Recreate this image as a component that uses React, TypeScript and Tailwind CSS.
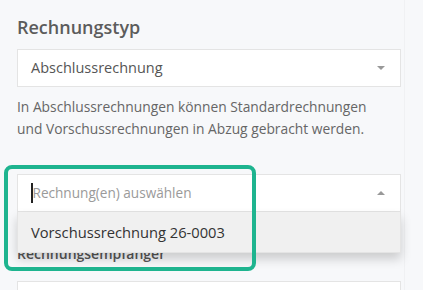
export default function App() {
  return (
    <div className="relative h-[290px] w-full overflow-hidden bg-[#f7f8fa] font-['Open_Sans',sans-serif]">
      <div className="h-full w-[405px] border-r border-[#f0f1f3] pl-[17px] pt-[15px]">
        <div className="w-[384px]">
          <h2 className="text-[18px] font-semibold leading-[25px] text-[#5c5c5c]">Rechnungstyp</h2>

          <div className="mt-[9px] flex h-[38px] items-center justify-between border border-[#e4e4e4] bg-white pl-[13px] pr-[15px] text-[14.5px] text-[#555]">
            <span>Abschlussrechnung</span>
            <span className="h-0 w-0 border-x-[4px] border-t-[4px] border-x-transparent border-t-[#999]" />
          </div>

          <p className="mt-[9px] whitespace-nowrap text-[13.8px] leading-[22px] text-[#666]">
            In Abschlussrechnungen können Standardrechnungen
            <br />
            und Vorschussrechnungen in Abzug gebracht werden.
          </p>

          <div className="relative mt-[34px]">
            <div className="flex h-[38px] items-center justify-between border border-[#e4e4e4] bg-white pl-[13px] pr-[15px] text-[13.6px]">
              <div className="flex items-center">
                <span className="h-[20px] w-[1.5px] bg-[#222]" />
                <span className="text-[#9a9a9a]">Rechnung(en) auswählen</span>
              </div>
              <span className="h-0 w-0 border-x-[4px] border-b-[4px] border-x-transparent border-b-[#999]" />
            </div>
            <div className="absolute left-0 top-full z-10 flex h-[41px] w-full items-center border border-t-0 border-[#e4e4e4] bg-[#f0f0f0] pl-[13px] text-[14.7px] text-[#333] shadow-[0_6px_10px_rgba(0,0,0,0.18)]">
              Vorschussrechnung 26-0003
            </div>
          </div>

          <div className="mt-[32px] text-[14px] font-semibold leading-[20px] text-[#555]">Rechnungsempfänger</div>
          <div className="mt-[17px] h-[38px] border border-[#e4e4e4] bg-white" />
        </div>
      </div>

      <div className="absolute left-[4px] top-[165px] z-20 h-[106px] w-[252px] rounded-[8px] border-[4px] border-[#1eb48f]" />
    </div>
  );
}
